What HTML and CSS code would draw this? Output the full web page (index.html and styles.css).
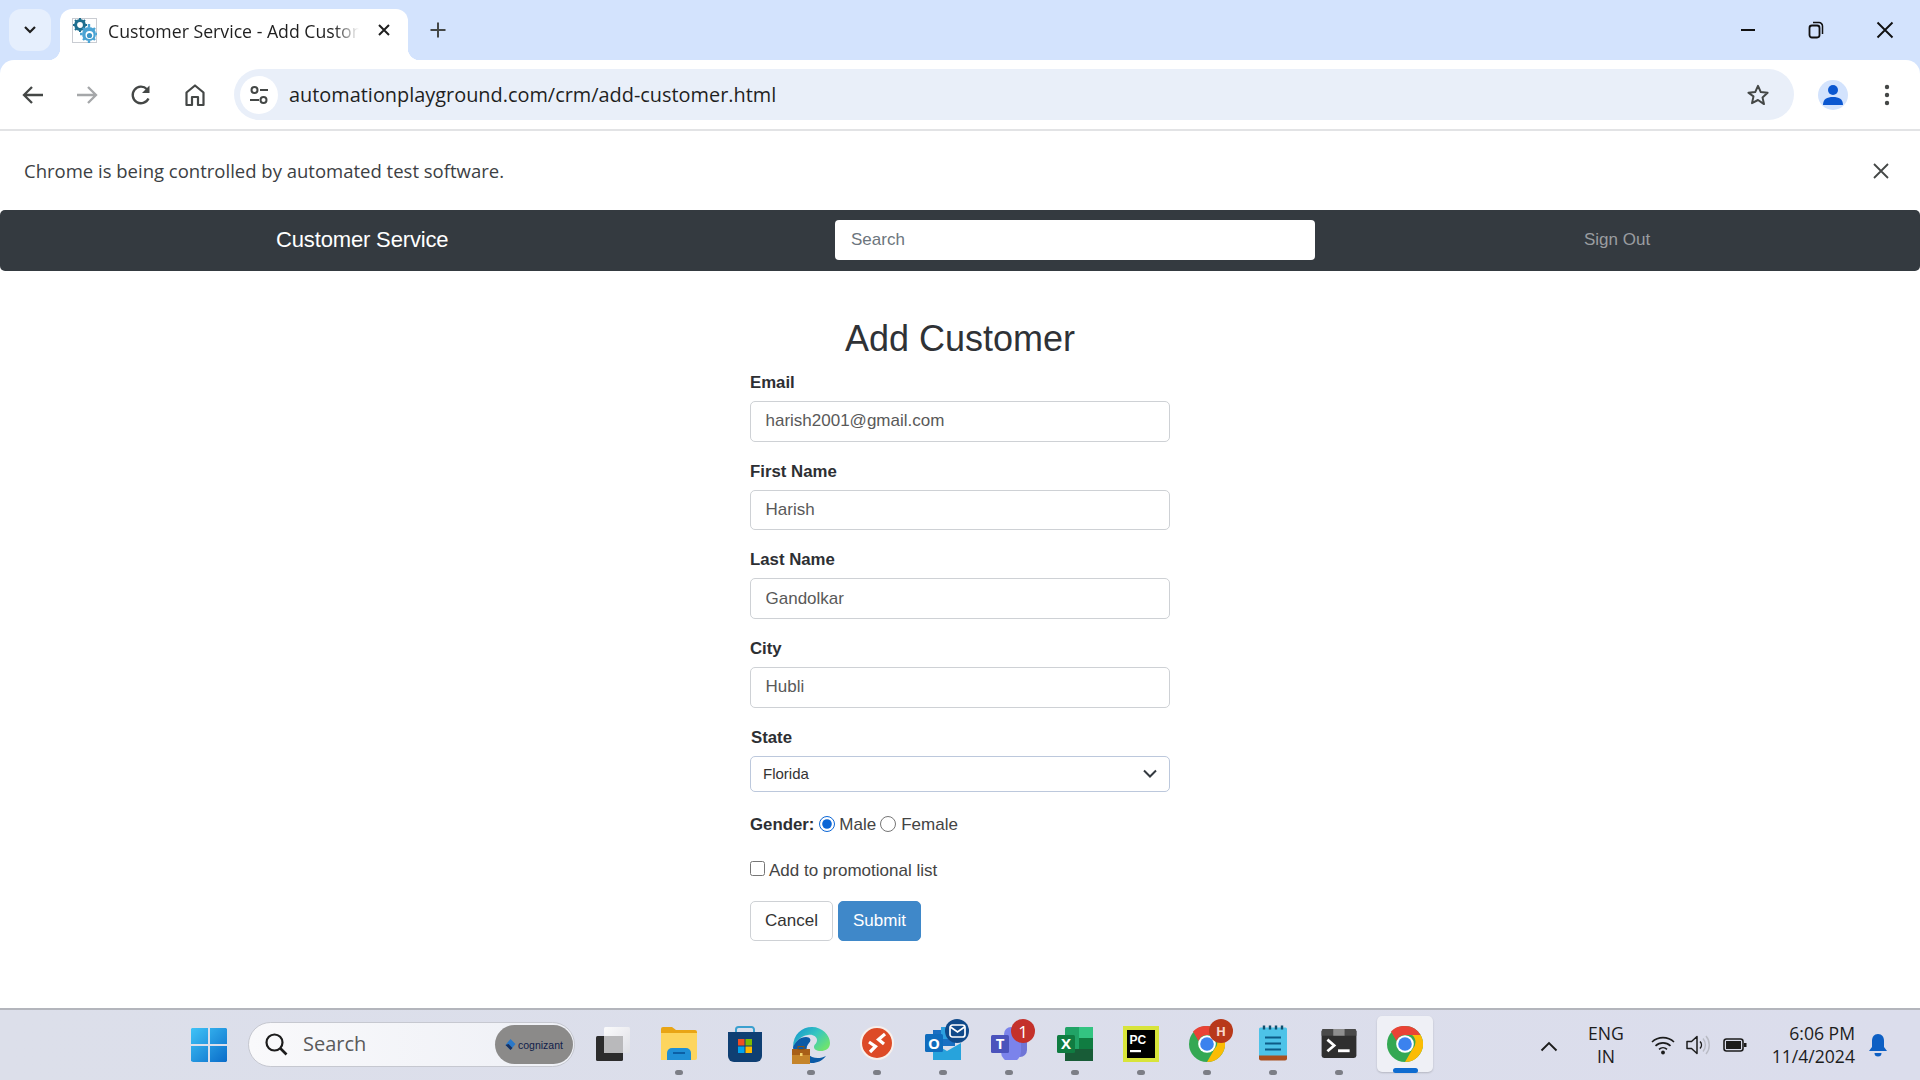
FILE: index.html
```html
<!DOCTYPE html>
<html lang="en">
<head>
<meta charset="utf-8">
<title>Customer Service - Add Customer</title>
<link rel="stylesheet" href="styles.css">
</head>
<body>
<div class="window">
  <div class="tabstrip">
    <button class="tabsearch" aria-label="Search tabs">
      <svg width="14" height="10" viewBox="0 0 14 10"><path d="M2 2l5 5 5-5" fill="none" stroke="#1f1f1f" stroke-width="2.2"/></svg>
    </button>
    <div class="tab">
      <svg class="favicon" width="25" height="25" viewBox="0 0 25 25">
        <rect x=".5" y=".5" width="24" height="24" fill="#fff" stroke="#c9ccd2"/>
        <circle cx="8" cy="7" r="4.4" fill="none" stroke="#1f6f8f" stroke-width="3"/>
        <path d="M8 0v3M8 11v3M1 7h3M12 7h3M3 2l2 2M11 10l2 2M13 2l-2 2M5 10l-2 2" stroke="#1f6f8f" stroke-width="2"/>
        <circle cx="17" cy="16" r="7" fill="#4aa3d3"/>
        <path d="M17 6v3M17 23v2M8 16h2M24 16h1M11 10l2 2M21 20l2 2M23 10l-2 2M13 20l-2 2" stroke="#4aa3d3" stroke-width="2.4"/>
        <circle cx="17.5" cy="17" r="4" fill="#fff"/>
        <circle cx="17.5" cy="17.5" r="2.6" fill="#3a94c6"/>
      </svg>
      <span class="tabtitle">Customer Service - Add Customer</span>
      <svg class="tabclose" width="14" height="14" viewBox="0 0 14 14"><path d="M2 2l10 10M12 2L2 12" stroke="#1f1f1f" stroke-width="2"/></svg>
    </div>
    <svg class="newtab" width="18" height="18" viewBox="0 0 18 18"><path d="M9 1.5v15M1.5 9h15" stroke="#444746" stroke-width="2"/></svg>
    <div class="winctrls">
      <svg width="16" height="16" viewBox="0 0 16 16"><path d="M1 8h14" stroke="#111" stroke-width="2"/></svg>
      <svg width="16" height="18" viewBox="0 0 16 18"><rect x="1.5" y="4.5" width="10" height="12" rx="2.4" fill="none" stroke="#111" stroke-width="1.8"/><path d="M5 1.6h6a3.5 3.5 0 0 1 3.5 3.5v8" fill="none" stroke="#111" stroke-width="1.5"/></svg>
      <svg width="18" height="18" viewBox="0 0 18 18"><path d="M1.5 1.5l15 15M16.500 1.5l-15 15" stroke="#111" stroke-width="1.9"/></svg>
    </div>
  </div>

  <div class="toolbar">
    <svg class="navicon" width="22" height="20" viewBox="0 0 22 20"><path d="M10 2L2 10l8 8M2 10h19" fill="none" stroke="#444746" stroke-width="2.300"/></svg>
    <svg class="navicon" width="22" height="20" viewBox="0 0 22 20"><path d="M12 2l8 8-8 8M20 10H1" fill="none" stroke="#a5a7a9" stroke-width="2.300"/></svg>
    <svg class="navicon" width="22" height="22" viewBox="0 0 22 22"><path d="M18.500 14.500A8.300 8.300 0 1 1 17 5.200" fill="none" stroke="#444746" stroke-width="2.300"/><path d="M19.500 1.500v7.500H12z" fill="#444746"/></svg>
    <svg class="navicon" width="22" height="24" viewBox="0 0 22 24"><path d="M2.500 22V9.500L11 2.500l8.500 7V22h-5.500v-8H8v8z" fill="none" stroke="#444746" stroke-width="2.200" stroke-linejoin="round"/></svg>
    <div class="omnibox">
      <span class="sitechip">
        <svg width="20" height="20" viewBox="0 0 20 20"><circle cx="5.500" cy="5" r="3" fill="none" stroke="#444746" stroke-width="2"/><path d="M11 5h8M1 15h9" stroke="#444746" stroke-width="2"/><circle cx="14.500" cy="15" r="3" fill="none" stroke="#444746" stroke-width="2"/></svg>
      </span>
      <span class="url">automationplayground.com/crm/add-customer.html</span>
      <svg class="star" width="24" height="24" viewBox="0 0 24 24"><path d="M12 2.800l2.800 6.300 6.800.7-5.100 4.600 1.500 6.700L12 17l-6 3.100 1.500-6.700L2.400 9.800l6.800-.7z" fill="none" stroke="#444746" stroke-width="2" stroke-linejoin="round"/></svg>
    </div>
    <span class="avatar">
      <svg width="20" height="22" viewBox="0 0 20 22"><circle cx="10" cy="6" r="5" fill="#0b57d0"/><path d="M0 21c0-6 4-8 10-8s10 2 10 8z" fill="#0b57d0"/></svg>
    </span>
    <svg class="menu" width="6" height="22" viewBox="0 0 6 22"><circle cx="3" cy="3" r="2.200" fill="#444746"/><circle cx="3" cy="11" r="2.200" fill="#444746"/><circle cx="3" cy="19" r="2.200" fill="#444746"/></svg>
  </div>

  <div class="infobar">
    <span>Chrome is being controlled by automated test software.</span>
    <svg width="16" height="16" viewBox="0 0 16 16"><path d="M1 1l14 14M15 1L1 15" stroke="#444746" stroke-width="1.800"/></svg>
  </div>

  <main class="page">
    <nav class="navbar">
      <a class="brand">Customer Service</a>
      <input class="navsearch" placeholder="Search">
      <a class="signout">Sign Out</a>
    </nav>
    <form class="form">
      <h2 class="title">Add Customer</h2>
      <div class="field">
        <label>Email</label>
        <input class="control" value="harish2001@gmail.com">
      </div>
      <div class="field">
        <label>First Name</label>
        <input class="control" value="Harish">
      </div>
      <div class="field">
        <label>Last Name</label>
        <input class="control" value="Gandolkar">
      </div>
      <div class="field">
        <label>City</label>
        <input class="control" value="Hubli">
      </div>
      <div class="field state">
        <label>State</label>
        <select class="select"><option>Florida</option></select>
      </div>
      <div class="gender">
        <b>Gender:</b>
        <input type="radio" name="g" checked><span>Male</span>
        <input type="radio" name="g"><span>Female</span>
      </div>
      <div class="promo">
        <input type="checkbox"><span>Add to promotional list</span>
      </div>
      <div class="actions">
        <button type="button" class="btn">Cancel</button>
        <button type="button" class="btn primary">Submit</button>
      </div>
    </form>
  </main>

  <footer class="taskbar">
    <div class="slot start">
      <svg width="36" height="36" viewBox="0 0 36 36">
        <defs><linearGradient id="w" x1="0" y1="0" x2="1" y2="1"><stop offset="0" stop-color="#3fc3f7"/><stop offset="1" stop-color="#0a6cc9"/></linearGradient></defs>
        <path d="M1 1h16v16H0V2zM19 1h16l1 1v15H19zM0 19h17v16H2l-2-1zM19 19h17v15l-1 1H19z" fill="url(#w)"/>
      </svg>
    </div>
    <div class="tbsearch">
      <svg width="24" height="24" viewBox="0 0 24 24"><circle cx="10.500" cy="10.500" r="8" fill="none" stroke="#1c1c1c" stroke-width="2.200"/><path d="M16.500 16.500l6 6" stroke="#1c1c1c" stroke-width="2.600"/></svg>
      <span class="tbsearchtext">Search</span>
      <span class="cog">
        <svg width="11" height="12" viewBox="0 0 10 12"><path d="M5 0l5 5-5 6-5-5z" fill="#2a78c9"/><path d="M0 6l5 5 2-2-4-4z" fill="#18305f"/></svg>
        <span>cognizant</span>
      </span>
    </div>

    <div class="slot plain">
      <svg width="36" height="36" viewBox="0 0 36 36">
        <defs><linearGradient id="tv" x1="0" y1="0" x2="1" y2="1"><stop offset="0" stop-color="#fbfbfc"/><stop offset="1" stop-color="#dfe0e6"/></linearGradient></defs>
        <rect x="9" y="1" width="26" height="26" rx="1.500" fill="url(#tv)"/>
        <rect x="1" y="10" width="27" height="25" rx="1.500" fill="#2c2c2c"/>
        <rect x="9" y="10" width="19" height="17" fill="#b9b9bb"/>
      </svg>
    </div>
    <div class="slot">
      <svg width="36" height="34" viewBox="0 0 36 34">
        <path d="M0 3a2 2 0 0 1 2-2h9l4 3h19a2 2 0 0 1 2 2v26H0z" fill="#e9a515"/>
        <path d="M0 7h36v25a2 2 0 0 1-2 2H0z" fill="#fdd55e"/>
        <path d="M6 34v-7a5 5 0 0 1 5-5h14a5 5 0 0 1 5 5v7z" fill="#1f8fd6"/>
        <rect x="12" y="26" width="12" height="2" fill="#0b5fa5"/>
      </svg>
    </div>
    <div class="slot plain">
      <svg width="36" height="36" viewBox="0 0 36 36">
        <path d="M9 6V3.500A2.500 2.500 0 0 1 11.500 1h13A2.500 2.500 0 0 1 27 3.500V6" fill="none" stroke="#3ba0cf" stroke-width="2"/>
        <path d="M1 6h34v24a6 6 0 0 1-6 6H7a6 6 0 0 1-6-6z" fill="#0f3f73"/>
        <rect x="11" y="13" width="6.500" height="6.500" fill="#f04e23"/><rect x="18.500" y="13" width="6.500" height="6.500" fill="#7fba00"/>
        <rect x="11" y="20.500" width="6.500" height="6.500" fill="#00a4ef"/><rect x="18.500" y="20.500" width="6.500" height="6.500" fill="#ffb900"/>
      </svg>
    </div>
    <div class="slot">
      <svg width="38" height="38" viewBox="0 0 38 38">
        <defs><linearGradient id="e" x1="0" y1="0" x2="1" y2=".7"><stop offset="0" stop-color="#0f8fd0"/><stop offset=".55" stop-color="#36c6c0"/><stop offset="1" stop-color="#6ee36f"/></linearGradient></defs>
        <path d="M1 21C1 8 10 1 20 1c10 0 18 8 18 16 0 6-5 8-9 8-5 0-7-2-7-4 0-3 3-3 3-7 0-3-4-6-9-5-8 1-11 6-15 12z" fill="url(#e)"/>
        <path d="M1 21c3-6 7-10 13-10 4 0 6 3 3 6-4 4-3 11 3 14 5 2 10 1 14-1-4 5-9 7-14 7-10 0-19-7-19-16z" fill="#0b5aa6"/>
        <rect x="0" y="23" width="18" height="15" fill="#c5842a"/><rect x="0" y="23" width="18" height="6" fill="#a85f17"/>
        <rect x="6" y="20.500" width="6" height="3" fill="none" stroke="#8a5312"/><rect x="8" y="27" width="2.500" height="3" fill="#f5d36c"/>
      </svg>
    </div>
    <div class="slot">
      <svg width="34" height="34" viewBox="0 0 34 34">
        <circle cx="17" cy="17" r="16" fill="#dd4a26" stroke="#f7efeb" stroke-width="2"/>
        <path d="M9 16l6.500 4.500L10 26M25 8l-6.500 5.500 5.500 4.500" fill="none" stroke="#fff" stroke-width="3.200"/>
      </svg>
    </div>
    <div class="slot">
      <svg width="36" height="34" viewBox="0 0 36 34">
        <rect x="8" y="4" width="22" height="16" fill="#1a6fc2"/>
        <rect x="16" y="1" width="14" height="12" fill="#2b9fe0"/>
        <path d="M8 17l14 8 14-8v17H8z" fill="#27a3dc"/>
        <rect x="0" y="8" width="18" height="18" rx="1.500" fill="#0f6cbd"/>
        <text x="9" y="22.500" class="ico-o">O</text>
      </svg>
      <span class="badge mail">
        <svg width="17" height="14" viewBox="0 0 17 14"><rect x="1" y="1" width="15" height="12" rx="2.500" fill="none" stroke="#fff" stroke-width="1.700"/><path d="M1.500 3l7 5 7-5" fill="none" stroke="#fff" stroke-width="1.700"/></svg>
      </span>
    </div>
    <div class="slot">
      <svg width="36" height="34" viewBox="0 0 36 34">
        <circle cx="28" cy="10" r="6" fill="#6f75d6"/>
        <circle cx="20" cy="8" r="7" fill="#7b83eb"/>
        <path d="M21 14h15v10a7 7 0 0 1-14 0z" fill="#6f75d6"/>
        <path d="M10 14h20v12a10 10 0 0 1-20 0z" fill="#7b83eb"/>
        <rect x="0" y="9" width="18" height="18" rx="1.500" fill="#4b53bc"/>
        <text x="9" y="23" class="ico-t">T</text>
      </svg>
      <span class="badge count">1</span>
    </div>
    <div class="slot">
      <svg width="36" height="36" viewBox="0 0 36 36">
        <rect x="8" y="1" width="28" height="34" rx="1.500" fill="#21a366"/>
        <rect x="22" y="1" width="14" height="11" fill="#33c481"/>
        <rect x="8" y="12" width="14" height="11" fill="#21a366"/>
        <rect x="22" y="12" width="14" height="11" fill="#107c41"/>
        <rect x="8" y="23" width="28" height="12" fill="#185c37"/>
        <rect x="0" y="9" width="18" height="18" rx="1.500" fill="#107c41"/>
        <text x="9" y="23" class="ico-x">X</text>
      </svg>
    </div>
    <div class="slot">
      <svg width="36" height="36" viewBox="0 0 36 36">
        <rect width="36" height="36" fill="#d8e43a"/>
        <rect x="4" y="4" width="28" height="28" fill="#000"/>
        <text x="6.500" y="18" class="ico-pc">PC</text>
        <rect x="7" y="24" width="11" height="2.200" fill="#fff"/>
      </svg>
    </div>
    <div class="slot">
      <svg width="36" height="36" viewBox="0 0 36 36">
        <use href="#chromeart"/>
      </svg>
      <span class="badge hbadge">H</span>
    </div>
    <div class="slot tall">
      <svg width="30" height="37" viewBox="0 0 30 36">
        <rect x="1" y="2" width="28" height="32" rx="1.500" fill="#4dc3e8"/>
        <path d="M1 30h28v3a2 2 0 0 1-2 2H3a2 2 0 0 1-2-2z" fill="#a9501f"/>
        <path d="M6 0v4M12 0v4M18 0v4M24 0v4" stroke="#0f4f6e" stroke-width="2.400"/>
        <path d="M7 12h16M7 18h16M7 24h16" stroke="#0d5b86" stroke-width="2.200"/>
      </svg>
    </div>
    <div class="slot term">
      <svg width="36" height="29" viewBox="0 0 36 30">
        <rect width="36" height="30" rx="2.500" fill="#2f2f2f"/>
        <path d="M0 2.500A2.500 2.500 0 0 1 2.500 0H12v7H0z" fill="#4a4a4a"/><rect x="12" width="12" height="7" fill="#8f8f8f"/><path d="M24 0h9.500A2.500 2.500 0 0 1 36 2.500V7H24z" fill="#4a4a4a"/>
        <path d="M6 11l7 6-7 6" fill="none" stroke="#fff" stroke-width="2.800"/><rect x="17" y="21" width="12" height="3" fill="#fff"/>
      </svg>
    </div>
    <div class="slot active">
      <svg width="36" height="36" viewBox="0 0 36 36">
        <defs>
          <g id="chromeart">
            <circle cx="18" cy="18" r="18" fill="#34a853"/>
            <path d="M18 0a18 18 0 0 1 15.600 9H18a9 9 0 0 0-8.500 6L4 5.500A18 18 0 0 1 18 0z" fill="#e94235"/>
            <path d="M33.600 9A18 18 0 0 1 18 36l7.800-13.500A9 9 0 0 0 25 9z" fill="#fbbc04"/>
            <circle cx="18" cy="18" r="8.800" fill="#fff"/>
            <circle cx="18" cy="18" r="6.800" fill="#3b82ee"/>
          </g>
        </defs>
        <use href="#chromeart"/>
      </svg>
    </div>

    <div class="tray">
      <svg class="chev" width="18" height="11" viewBox="0 0 18 11"><path d="M1.500 9.500L9 2l7.500 7.500" fill="none" stroke="#1c1c1c" stroke-width="1.900"/></svg>
      <div class="lang"><span>ENG</span><span>IN</span></div>
      <svg class="wifi" width="24" height="20" viewBox="0 0 24 20"><path d="M1 7a16 16 0 0 1 22 0M4.500 10.800a11 11 0 0 1 15 0M8 14.300a6 6 0 0 1 8 0" fill="none" stroke="#1c1c1c" stroke-width="1.600"/><circle cx="12" cy="17.500" r="1.900" fill="#1c1c1c"/></svg>
      <svg class="vol" width="24" height="22" viewBox="0 0 24 22"><path d="M1 7.500h4.500L11 2.500v17l-5.500-5H1z" fill="none" stroke="#1c1c1c" stroke-width="1.500" stroke-linejoin="round"/><path d="M14 7.500a5 5 0 0 1 0 7" fill="none" stroke="#1c1c1c" stroke-width="1.500"/><path d="M17 4.500a10 10 0 0 1 0 13M20 2a14 14 0 0 1 0 18" fill="none" stroke="#b9bbc4" stroke-width="1.400"/></svg>
      <svg class="batt" width="24" height="14" viewBox="0 0 24 14"><rect x="1" y="1" width="19" height="12" rx="2.500" fill="none" stroke="#1c1c1c" stroke-width="1.600"/><rect x="3" y="3" width="15" height="8" fill="#1c1c1c"/><rect x="21" y="5" width="2.500" height="4" fill="#1c1c1c"/></svg>
      <div class="clock"><span>6:06 PM</span><span>11/4/2024</span></div>
      <svg class="bell" width="20" height="24" viewBox="0 0 20 24"><path d="M10 1c4 0 6 3 6 7v6l3 4H1l3-4V8c0-4 2-7 6-7z" fill="#0d5fc4"/><path d="M6.500 20h7a3.500 3.500 0 0 1-7 0z" fill="#0d5fc4"/></svg>
    </div>
  </footer>
</div>
</body>
</html>
```

FILE: styles.css
```css
* { box-sizing: border-box; }
html, body { margin: 0; padding: 0; }
body { font-family: "Liberation Sans", Arial, sans-serif; color: #333; background: #fff; }
.window { width: 1920px; height: 1080px; display: flex; flex-direction: column; overflow: hidden; background: #d3e3fd; }

.tabstrip { height: 60px; flex: none; display: flex; align-items: flex-start; padding: 9px 0 0 9px; background: #d3e3fd; }
.tabsearch { width: 42px; height: 42px; border: 0; padding: 0; border-radius: 12px; background: #e6effd; display: flex; align-items: center; justify-content: center; }
.tab { position: relative; width: 348px; height: 51px; margin-left: 9px; padding: 0 16px 0 12px; background: #fff; border-radius: 12px 12px 0 0; display: flex; align-items: flex-start; }
.tab::before, .tab::after { content: ""; position: absolute; bottom: 0; width: 12px; height: 12px; }
.tab::before { left: -12px; background: radial-gradient(circle at 0 0, #d3e3fd 12px, #fff 12.500px); }
.tab::after { right: -12px; background: radial-gradient(circle at 100% 0, #d3e3fd 12px, #fff 12.500px); }
.favicon { margin-top: 9px; flex: none; }
.tabtitle { width: 251px; margin: 9px 0 0 11px; overflow: hidden; white-space: nowrap; font: 17.700px/26px "Open Sans", sans-serif; color: #1f1f1f; -webkit-mask-image: linear-gradient(90deg, #000 90%, transparent); mask-image: linear-gradient(90deg, #000 90%, transparent); }
.tabclose { margin: 14px 0 0 18px; flex: none; }
.newtab { margin: 12px 0 0 21px; flex: none; }
.winctrls { margin-left: auto; display: flex; align-items: center; gap: 52px; padding: 12px 26px 0 0; }

.toolbar { height: 71px; flex: none; display: flex; align-items: center; padding: 0 0 0 22px; background: #fff; border-radius: 14px 14px 0 0; border-bottom: 2px solid #e2e3e5; }
.navicon { flex: none; margin-right: 32px; }
.navicon:nth-child(4) { margin-right: 28px; }
.omnibox { width: 1560px; height: 51px; flex: none; display: flex; align-items: center; padding: 0 24px 0 6px; background: #e9eff9; border-radius: 26px; }
.sitechip { width: 38px; height: 38px; flex: none; border-radius: 50%; background: #fff; display: flex; align-items: center; justify-content: center; }
.url { margin-left: 11px; font: 19.900px/28px "Open Sans", sans-serif; color: #1f1f1f; }
.star { margin-left: auto; }
.avatar { width: 30px; height: 30px; margin-left: 24px; flex: none; border-radius: 50%; background: #d3e3fd; display: flex; align-items: flex-end; justify-content: center; padding-bottom: 4px; }
.menu { margin-left: 36px; flex: none; }

.infobar { height: 79px; flex: none; display: flex; align-items: center; justify-content: space-between; padding: 0 31px 0 24px; background: #fff; font: 18.500px/26px "Open Sans", sans-serif; color: #3c4043; }
.page { flex: 1; min-height: 0; display: flex; flex-direction: column; background: #fff; }

.navbar { height: 61px; flex: none; display: flex; align-items: center; background: #343a40; border-radius: 5px; padding: 0 0 1px 276px; }
.brand { width: 559px; font-size: 22px; color: #fff; letter-spacing: -.15px; }
.navsearch { width: 480px; height: 40px; border: 0; border-radius: 4px; padding: 0 16px; font: 17px "Liberation Sans", sans-serif; background: #fff; }
.navsearch::placeholder { color: #6c757d; opacity: 1; }
.signout { margin-left: 269px; font-size: 17px; color: #9a9da0; }

.form { width: 420px; margin: 0 auto; display: flex; flex-direction: column; font-size: 17px; }
.title { margin: 46px 0 0; height: 53px; font-size: 36px; line-height: 44px; font-weight: 400; text-align: center; color: #2f3236; }
.field { display: flex; flex-direction: column; margin-bottom: 17px; }
.field label { height: 24px; line-height: 25px; font-weight: 700; font-size: 16.800px; margin-bottom: 7px; color: #2d2f33; }
.state label { padding-left: 1px; }
.control { height: 40.670px; width: 100%; border: 1.500px solid #ced1d5; border-radius: 5px; padding: 0 14.500px; font: 17px "Liberation Sans", sans-serif; color: #595959; background: #fff; outline: 0; }
.select { height: 36px; width: 100%; border: 1.500px solid #bcc8dc; border-radius: 5px; padding: 0 12px; font: 15px "Liberation Sans", sans-serif; color: #333; appearance: none; -webkit-appearance: none; background: #fff url("data:image/svg+xml,%3Csvg xmlns='http://www.w3.org/2000/svg' width='14' height='9' viewBox='0 0 14 9'%3E%3Cpath d='M1 1.500l6 6 6-6' fill='none' stroke='%23343a40' stroke-width='2'/%3E%3C/svg%3E") no-repeat right 12px center; }
.gender { display: flex; align-items: center; height: 24px; margin-top: 4px; color: #444; white-space: nowrap; }
.gender b { color: #2d2f33; font-size: 16.800px; }
.gender input { width: 16px; height: 16px; margin: -2px 4px 0 5px; flex: none; accent-color: #0b66d6; }
.gender input + span + input { margin-left: 4px; margin-right: 5px; }
.promo { display: flex; align-items: center; height: 24px; margin-top: 22px; color: #444; }
.promo input { width: 15px; height: 15px; margin: -5px 4px 0 0; flex: none; }
.actions { display: flex; gap: 5px; margin-top: 18px; }
.btn { width: 83px; height: 40px; border: 1px solid #ced1d5; border-radius: 5px; background: #fff; color: #333; font: 17px "Liberation Sans", sans-serif; padding: 0; }
.primary { background: #3f88c9; border-color: #3f88c9; color: #fff; }

.taskbar { height: 72px; flex: none; display: flex; align-items: flex-start; padding: 8px 0 0 176px; background: linear-gradient(90deg, #dcdfea, #dbddec); border-top: 2px solid #b3b5bc; }
.slot { position: relative; width: 66px; height: 62px; flex: none; display: flex; align-items: flex-start; justify-content: center; padding-top: 8px; }
.slot.start { padding-top: 9px; }
.slot.tall { padding-top: 7px; }
.slot.term { padding-top: 11px; }
.slot::after { content: ""; position: absolute; left: 29px; top: 52px; width: 8px; height: 5px; border-radius: 3px; background: #7c7e86; }
.slot.start::after, .slot.plain::after { display: none; }
.slot.active { width: 56px; height: 56px; margin: -2px 5px 0; padding-top: 10px; background: #eff0f6; border-radius: 5px; box-shadow: 0 1px 2px rgba(0,0,0,.18); }
.slot.active::after { left: 16px; top: 52px; width: 25px; height: 5px; background: #0f6cd0; }
.tbsearch { width: 327px; height: 45px; flex: none; margin: 4px 5px 0 6px; display: flex; align-items: center; padding: 0 1px 2px 15px; background: linear-gradient(90deg, #f9f9fb, #eef0f6); border-radius: 23px; border: 1px solid #c6c8d0; }
.tbsearchtext { margin-left: 15px; font: 20px "Open Sans", sans-serif; color: #5a5a5a; }
.cog { margin: 2px 0 0 auto; width: 78px; height: 39px; border-radius: 20px; background: #8b8a89; display: flex; align-items: center; justify-content: center; gap: 2px; color: #10204a; font: 10.500px "Liberation Sans", sans-serif; }
.badge { position: absolute; display: flex; align-items: center; justify-content: center; border-radius: 50%; }
.mail { left: 35px; top: 1px; width: 24px; height: 24px; background: #0f4a8a; }
.count { left: 35px; top: 1px; width: 24px; height: 24px; background: #c4312b; color: #fff; font: 17px "Open Sans", sans-serif; }
.hbadge { left: 35px; top: 1px; width: 24px; height: 24px; background: #b8391a; color: #f7d6c8; font: 700 13px "Open Sans", sans-serif; }
.ico-o, .ico-t, .ico-x { fill: #fff; font: 700 15px "Open Sans", sans-serif; text-anchor: middle; }
.ico-pc { fill: #fff; font: 700 12px "Liberation Sans", sans-serif; }

.tray { margin-left: auto; height: 54px; display: flex; align-items: center; color: #1c1c1c; font: 17.600px/23px "Open Sans", sans-serif; padding-right: 32px; }
.chev { margin-top: 2px; }
.lang { margin-left: 29px; display: flex; flex-direction: column; align-items: center; width: 38px; }
.wifi { margin-left: 26px; }
.vol { margin-left: 11px; }
.batt { margin-left: 13px; }
.clock { margin-left: 24px; display: flex; flex-direction: column; align-items: flex-end; width: 84px; }
.bell { margin-left: 13px; }
```
